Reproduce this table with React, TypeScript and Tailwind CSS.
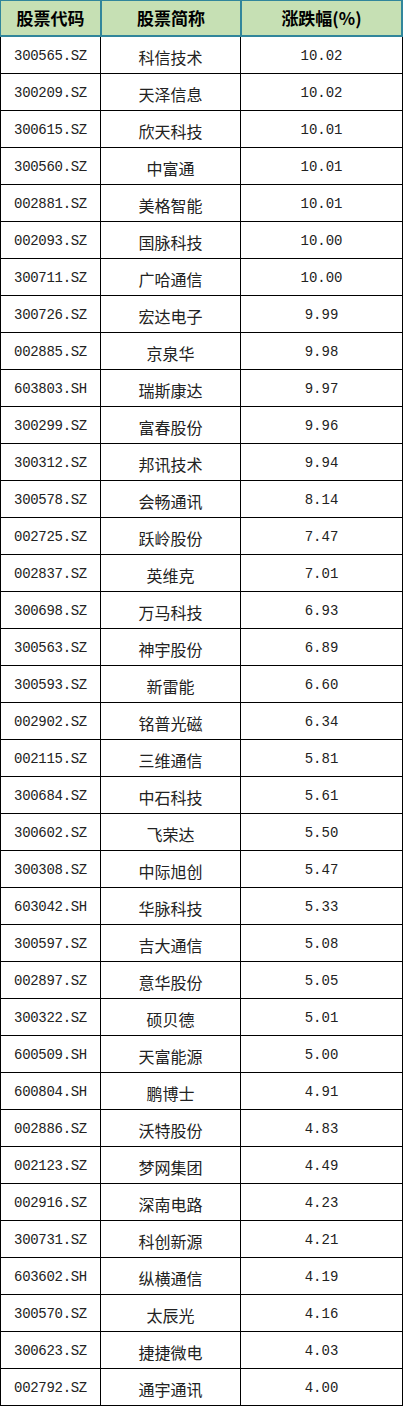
const ROWS: [string, string, string][] = [
  ['300565.SZ', '科信技术', '10.02'],
  ['300209.SZ', '天泽信息', '10.02'],
  ['300615.SZ', '欣天科技', '10.01'],
  ['300560.SZ', '中富通', '10.01'],
  ['002881.SZ', '美格智能', '10.01'],
  ['002093.SZ', '国脉科技', '10.00'],
  ['300711.SZ', '广哈通信', '10.00'],
  ['300726.SZ', '宏达电子', '9.99'],
  ['002885.SZ', '京泉华', '9.98'],
  ['603803.SH', '瑞斯康达', '9.97'],
  ['300299.SZ', '富春股份', '9.96'],
  ['300312.SZ', '邦讯技术', '9.94'],
  ['300578.SZ', '会畅通讯', '8.14'],
  ['002725.SZ', '跃岭股份', '7.47'],
  ['002837.SZ', '英维克', '7.01'],
  ['300698.SZ', '万马科技', '6.93'],
  ['300563.SZ', '神宇股份', '6.89'],
  ['300593.SZ', '新雷能', '6.60'],
  ['002902.SZ', '铭普光磁', '6.34'],
  ['002115.SZ', '三维通信', '5.81'],
  ['300684.SZ', '中石科技', '5.61'],
  ['300602.SZ', '飞荣达', '5.50'],
  ['300308.SZ', '中际旭创', '5.47'],
  ['603042.SH', '华脉科技', '5.33'],
  ['300597.SZ', '吉大通信', '5.08'],
  ['002897.SZ', '意华股份', '5.05'],
  ['300322.SZ', '硕贝德', '5.01'],
  ['600509.SH', '天富能源', '5.00'],
  ['600804.SH', '鹏博士', '4.91'],
  ['002886.SZ', '沃特股份', '4.83'],
  ['002123.SZ', '梦网集团', '4.49'],
  ['002916.SZ', '深南电路', '4.23'],
  ['300731.SZ', '科创新源', '4.21'],
  ['603602.SH', '纵横通信', '4.19'],
  ['300570.SZ', '太辰光', '4.16'],
  ['300623.SZ', '捷捷微电', '4.03'],
  ['002792.SZ', '通宇通讯', '4.00'],
]

const MONO = "font-['Liberation_Mono','Noto_Sans_CJK_SC',monospace]"
const CJK = "font-['Noto_Sans_CJK_SC',sans-serif]"

export default function App() {
  return (
    <div className="w-[403px] bg-white text-[#222]">
      {/* Header */}
      <div className="flex h-[37px] bg-[#c6e0b4] border-t border-l border-[#31869b]">
        <div className={`w-[101px] flex items-center justify-center border-r-2 border-b-2 border-[#31869b] text-[17px] font-bold text-black ${CJK}`}>
          股票代码
        </div>
        <div className={`w-[140px] flex items-center justify-center border-r-2 border-b-2 border-[#31869b] text-[17px] font-bold text-black ${CJK}`}>
          股票简称
        </div>
        <div className={`w-[161px] flex items-center justify-center border-r-2 border-b-2 border-[#31869b] text-[17px] font-bold text-black ${CJK}`}>
          涨跌幅(%)
        </div>
      </div>

      {/* Rows */}
      {ROWS.map(([code, name, pct]) => (
        <div key={code} className="flex h-[37px] border-b border-black">
          <div className={`w-[101px] flex items-center justify-center pt-[3px] border-l border-r border-black text-[14px] tracking-[-0.3px] ${MONO}`}>
            {code}
          </div>
          <div className={`w-[140px] flex items-center justify-center pt-[3px] border-r border-black text-[16px] ${CJK}`}>
            {name}
          </div>
          <div className={`w-[162px] flex items-center justify-center pt-[3px] border-r border-black text-[14px] ${MONO}`}>
            {pct}
          </div>
        </div>
      ))}
    </div>
  )
}
